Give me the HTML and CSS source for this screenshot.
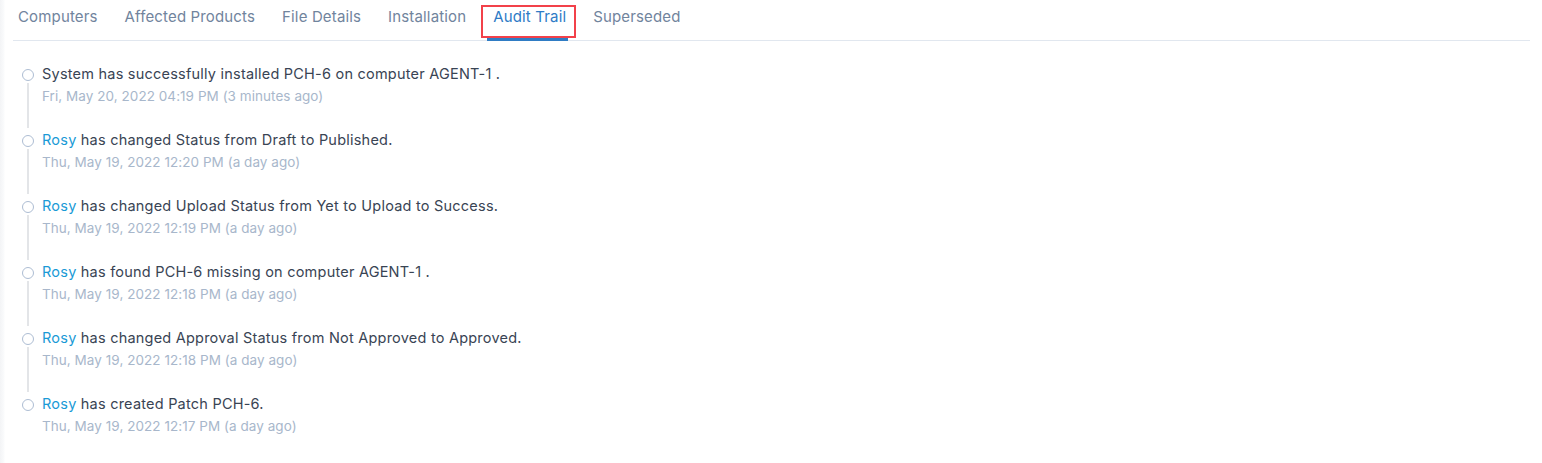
FILE: index.html
```html
<!DOCTYPE html>
<html lang="en">
<head>
<meta charset="utf-8">
<title>Audit Trail</title>
<link rel="stylesheet" href="styles.css">
</head>
<body>
<div class="panel">
  <nav class="tabs">
    <a class="tab">Computers</a>
    <a class="tab">Affected Products</a>
    <a class="tab">File Details</a>
    <a class="tab">Installation</a>
    <a class="tab active">Audit Trail</a>
    <a class="tab">Superseded</a>
  </nav>
  <ul class="timeline">
    <li class="item">
      <div class="marker"><span class="dot"></span><span class="line"></span></div>
      <div class="body">
        <div class="msg">System has successfully installed PCH-6 on computer AGENT-1 .</div>
        <div class="date">Fri, May 20, 2022 04:19 PM (3 minutes ago)</div>
      </div>
    </li>
    <li class="item">
      <div class="marker"><span class="dot"></span><span class="line"></span></div>
      <div class="body">
        <div class="msg"><span class="user">Rosy</span> has changed Status from Draft to Published.</div>
        <div class="date">Thu, May 19, 2022 12:20 PM (a day ago)</div>
      </div>
    </li>
    <li class="item">
      <div class="marker"><span class="dot"></span><span class="line"></span></div>
      <div class="body">
        <div class="msg"><span class="user">Rosy</span> has changed Upload Status from Yet to Upload to Success.</div>
        <div class="date">Thu, May 19, 2022 12:19 PM (a day ago)</div>
      </div>
    </li>
    <li class="item">
      <div class="marker"><span class="dot"></span><span class="line"></span></div>
      <div class="body">
        <div class="msg"><span class="user">Rosy</span> has found PCH-6 missing on computer AGENT-1 .</div>
        <div class="date">Thu, May 19, 2022 12:18 PM (a day ago)</div>
      </div>
    </li>
    <li class="item">
      <div class="marker"><span class="dot"></span><span class="line"></span></div>
      <div class="body">
        <div class="msg"><span class="user">Rosy</span> has changed Approval Status from Not Approved to Approved.</div>
        <div class="date">Thu, May 19, 2022 12:18 PM (a day ago)</div>
      </div>
    </li>
    <li class="item last">
      <div class="marker"><span class="dot"></span></div>
      <div class="body">
        <div class="msg"><span class="user">Rosy</span> has created Patch PCH-6.</div>
        <div class="date">Thu, May 19, 2022 12:17 PM (a day ago)</div>
      </div>
    </li>
  </ul>
</div>
</body>
</html>
```

FILE: styles.css
```css
* { box-sizing: border-box; }
html, body { margin: 0; padding: 0; }
body {
  background: linear-gradient(to right, #f3f4f6, #fafbfc 4px, #ffffff 5px);
  font-family: Inter, "Open Sans", sans-serif;
  height: 463px;
  overflow: hidden;
}
.panel {
  margin-left: 5px;
  background: #ffffff;
  height: 463px;
  padding: 0 12px 0 8px;
}
.tabs {
  display: flex;
  gap: 23px;
  padding-left: 3px;
  border-bottom: 1px solid #e1e7ef;
  height: 41px;
}
.tab {
  position: relative;
  padding: 7px 2px 11px;
  line-height: 20px;
  font-size: 15px;
  letter-spacing: 0.15px;
  color: #71849d;
  border-bottom: 3px solid transparent;
  margin-bottom: -1px;
  height: 41px;
  white-space: nowrap;
}
.tab.active {
  color: #2e7bc6;
  border-bottom-color: #2f7cc4;
  padding: 7px 2px 11px 6px;
  margin-left: -4px;
}
.tab.active::after {
  content: "";
  position: absolute;
  left: -6px;
  right: -8px;
  top: 5px;
  height: 29px;
  border: 2px solid #f2414a;
}
.timeline {
  list-style: none;
  margin: 22px 0 0;
  padding: 0;
}
.item {
  display: grid;
  grid-template-columns: 29px 1fr;
  height: 66px;
}
.marker {
  display: flex;
  flex-direction: column;
  align-items: center;
  padding-top: 6px;
  padding-left: 1px;
}
.dot {
  width: 12px;
  height: 12px;
  border-radius: 50%;
  border: 1px solid #adbdd3;
  background: #fff;
  flex: none;
}
.line {
  flex: 1;
  width: 2px;
  margin: 2px 0 1px -1px;
  background: #e3e5e8;
}
.msg {
  line-height: 22px;
  font-size: 14.5px;
  letter-spacing: 0.22px;
  color: #394454;
  white-space: nowrap;
}
.user { color: #1a9ad6; }
.date {
  line-height: 22px;
  font-size: 13.5px;
  letter-spacing: 0.05px;
  color: #a8b7cb;
  white-space: nowrap;
}
```
